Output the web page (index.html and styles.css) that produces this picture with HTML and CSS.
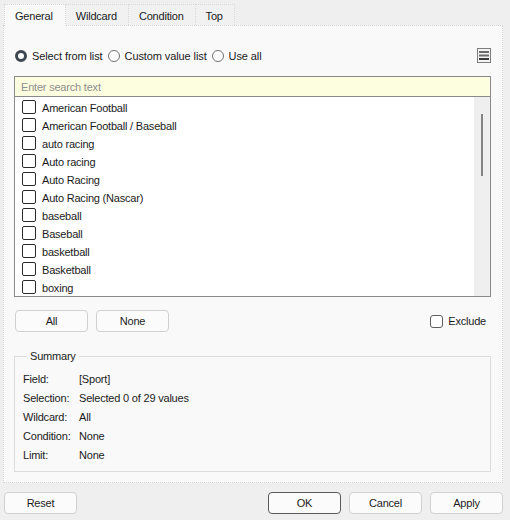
FILE: index.html
```html
<!DOCTYPE html>
<html>
<head>
<meta charset="utf-8">
<link rel="stylesheet" href="styles.css">
</head>
<body>
<div class="dialog">
  <div class="tabs">
    <div class="tab active">General</div>
    <div class="tab">Wildcard</div>
    <div class="tab">Condition</div>
    <div class="tab">Top</div>
  </div>
  <div class="panel">
    <div class="mode-row">
      <label class="radio checked"><span class="dot"></span>Select from list</label>
      <label class="radio"><span class="dot"></span>Custom value list</label>
      <label class="radio"><span class="dot"></span>Use all</label>
      <span class="spacer"></span>
      <span class="menu-btn">
        <svg width="10" height="9" viewBox="0 0 10 9"><rect x="0" y="0" width="10" height="2" fill="#6b6b6b"/><rect x="0" y="3.5" width="10" height="2" fill="#6b6b6b"/><rect x="0" y="7" width="10" height="2" fill="#3a3a3a"/></svg>
      </span>
    </div>
    <div class="search">Enter search text</div>
    <div class="list">
      <div class="items">
        <div class="item"><span class="cb"></span>American Football</div>
        <div class="item"><span class="cb"></span>American Football / Baseball</div>
        <div class="item"><span class="cb"></span>auto racing</div>
        <div class="item"><span class="cb"></span>Auto racing</div>
        <div class="item"><span class="cb"></span>Auto Racing</div>
        <div class="item"><span class="cb"></span>Auto Racing (Nascar)</div>
        <div class="item"><span class="cb"></span>baseball</div>
        <div class="item"><span class="cb"></span>Baseball</div>
        <div class="item"><span class="cb"></span>basketball</div>
        <div class="item"><span class="cb"></span>Basketball</div>
        <div class="item"><span class="cb"></span>boxing</div>
      </div>
      <div class="scrollbar"><div class="thumb"></div></div>
    </div>
    <div class="btn-row">
      <button class="btn">All</button>
      <button class="btn">None</button>
      <span class="spacer"></span>
      <label class="check"><span class="cb round"></span>Exclude</label>
    </div>
    <fieldset class="summary">
      <legend>Summary</legend>
      <div class="srow"><span class="k">Field:</span><span>[Sport]</span></div>
      <div class="srow"><span class="k">Selection:</span><span>Selected 0 of 29 values</span></div>
      <div class="srow"><span class="k">Wildcard:</span><span>All</span></div>
      <div class="srow"><span class="k">Condition:</span><span>None</span></div>
      <div class="srow"><span class="k">Limit:</span><span>None</span></div>
    </fieldset>
  </div>
  <div class="footer">
    <button class="btn">Reset</button>
    <span class="spacer"></span>
    <button class="btn default">OK</button>
    <button class="btn">Cancel</button>
    <button class="btn">Apply</button>
  </div>
</div>
</body>
</html>
```
FILE: styles.css
```css
html, body {
  margin: 0;
  padding: 0;
  background: #eeefee;
}
body {
  font-family: "Liberation Sans", Arial, sans-serif;
  font-size: 11px;
  letter-spacing: -0.2px;
  color: #1b1b1b;
}
.dialog {
  width: 510px;
  height: 520px;
  box-sizing: border-box;
  padding: 4px 0 0 0;
  display: flex;
  flex-direction: column;
}
.tabs {
  display: flex;
  margin-left: 4px;
  height: 21px;
}
.tab {
  padding: 0 11px 0 10px;
  line-height: 22px;
  border: 1px dotted #d8d8d8;
  border-bottom: none;
  background: #f0f1f0;
  margin-right: -1px;
}
.tab.active {
  background: #f9f9f9;
  position: relative;
  z-index: 1;
  margin-bottom: -1px;
  padding: 0 12px 0 10px;
}
.panel {
  margin: 0 7px 0 3px;
  height: 458px;
  box-sizing: border-box;
  border: 1px dotted #d6d6d6;
  background: #f9f9f9;
  padding: 22px 11px 0 10px;
  display: flex;
  flex-direction: column;
}
.mode-row {
  display: flex;
  align-items: center;
  height: 16px;
  padding-left: 1px;
}
.spacer { flex: 1; }
.radio {
  display: flex;
  align-items: center;
  margin-right: 5px;
  letter-spacing: -0.1px;
}
.radio .dot {
  width: 12px;
  height: 12px;
  border: 1px solid #6f6f6f;
  border-radius: 50%;
  box-sizing: border-box;
  background: #fff;
  margin-right: 5px;
}
.radio.checked .dot {
  border: 3.5px solid #3e4652;
  background: #ffffff;
}
.menu-btn {
  width: 14px;
  height: 15px;
  box-sizing: border-box;
  border: 1px solid #7c7c7c;
  display: flex;
  align-items: center;
  justify-content: center;
  background: #f4f4f4;
  margin-top: -2px;
}
.search {
  margin-top: 12px;
  height: 21px;
  box-sizing: border-box;
  border: 1px solid #8a8a8a;
  background: #fdfddf;
  color: #8e8e8e;
  line-height: 20px;
  padding-left: 6px;
}
.list {
  height: 200px;
  box-sizing: border-box;
  border: 1px solid #8a8a8a;
  border-top: none;
  background: #fff;
  display: flex;
}
.items {
  flex: 1;
  padding-top: 1px;
}
.item {
  height: 18px;
  display: flex;
  align-items: center;
  padding-left: 7px;
  line-height: 18px;
  padding-top: 1px;
  box-sizing: border-box;
}
.cb {
  width: 14px;
  height: 14px;
  box-sizing: border-box;
  border: 1px solid #2a2a2a;
  border-radius: 2px;
  background: #fff;
  margin-right: 6px;
  margin-top: -1px;
}
.scrollbar {
  width: 16px;
  background: #eeefee;
  position: relative;
}
.thumb {
  position: absolute;
  left: 7px;
  top: 17px;
  width: 2px;
  height: 62px;
  background: #858585;
}
.btn-row {
  display: flex;
  align-items: center;
  margin-top: 13px;
  padding-left: 1px;
  gap: 8px;
}
.btn {
  width: 73px;
  height: 22px;
  box-sizing: border-box;
  border: 1px solid #d0d0d0;
  border-radius: 4px;
  background: #fbfbfb;
  font-family: inherit;
  font-size: 11px;
  letter-spacing: -0.2px;
  color: #1b1b1b;
  padding: 0;
}
.btn.default {
  border-color: #5a5a5a;
}
.check {
  display: flex;
  align-items: center;
  margin-right: 5px;
}
.check .cb {
  width: 13px;
  height: 13px;
  border-color: #5f5f5f;
  border-radius: 3px;
  margin-right: 5px;
  margin-top: 0;
}
.summary {
  margin: 18px 0 0 0;
  padding: 7px 0 0 8px;
  border: 1px solid #dcdcdc;
  height: 122px;
  box-sizing: border-box;
}
.summary legend {
  padding: 0 3px;
  margin-left: 4px;
}
.srow {
  display: flex;
  height: 19px;
  align-items: center;
}
.srow .k {
  width: 56px;
}
.footer {
  display: flex;
  margin-top: 9px;
  padding: 0 7px 0 4px;
  gap: 8px;
}
```
